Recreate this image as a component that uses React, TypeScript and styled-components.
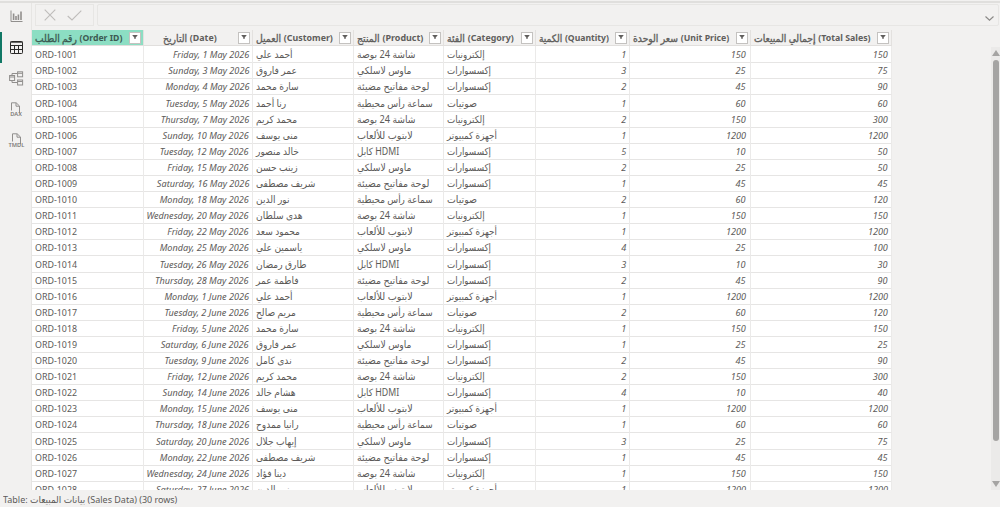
import React from "react";
import styled, { createGlobalStyle } from "styled-components";

const GlobalStyle = createGlobalStyle`
  html, body { margin: 0; padding: 0; overflow: hidden; }
  * { box-sizing: border-box; }
  body { font-family: "Noto Sans", "DejaVu Sans", sans-serif; color: #5c5a58; background: #f2f1f0; }
`;

const Window = styled.div`
  width: 1000px;
  height: 507px;
  padding-top: 1px;
  display: flex;
  flex-direction: column;
  overflow: hidden;
  background: #f2f1f0;
`;

const Body = styled.div`
  display: flex;
  height: 489px;
  border-top: 2px solid #e0dfdd;
`;

const Rail = styled.nav`
  width: 31px;
  flex: none;
  display: flex;
  flex-direction: column;
  margin-top: -2px;
`;

const RailItem = styled.div<{ $active?: boolean }>`
  height: 31px;
  display: flex;
  align-items: center;
  justify-content: center;
  border-left: 2px solid ${(p) => (p.$active ? "#117865" : "transparent")};
  color: ${(p) => (p.$active ? "#2b2a29" : "#918f8d")};
  padding-right: 1px;
`;

const FileIcon = styled.div`
  display: flex;
  flex-direction: column;
  align-items: center;
  svg { display: block; }
`;

const FileLabel = styled.span`
  font-size: 6px;
  font-weight: 600;
  line-height: 6px;
  margin-top: -3px;
  color: #7c7a78;
  transform: scaleX(0.95);
`;

const Main = styled.main`
  flex: 1;
  min-width: 0;
  display: flex;
  flex-direction: column;
  border-left: 1px solid #e6e5e3;
`;

const FormulaBar = styled.div`
  display: flex;
  gap: 3px;
  padding: 1px 1px 4px 3px;
  height: 27px;
`;

const Actions = styled.div`
  width: 59px;
  border: 1px solid #e7e6e4;
  display: flex;
  align-items: center;
  gap: 11px;
  padding: 0 0 0 8px;
  color: #bebcba;
`;

const Input = styled.div`
  flex: 1;
  border: 1px solid #e7e6e4;
  border-radius: 2px;
  display: flex;
  justify-content: flex-end;
  align-items: center;
  padding: 6px 4px 0 0;
  color: #8a8886;
`;

const Content = styled.div`
  display: flex;
  justify-content: space-between;
  height: 460px;
`;

const Grid = styled.div`
  width: 860px;
  height: 460px;
  overflow: hidden;
  background: #fff;
`;

const Row = styled.div`
  display: grid;
  grid-template-columns: 112px 109px 101px 90px 92px 94px 121px 141px;
  height: 16.1px;
`;

const HeadRow = styled(Row)`
  height: 16.3px;
  background: #f2f1f0;
`;

const HeadCell = styled.div<{ $selected?: boolean }>`
  display: flex;
  align-items: center;
  justify-content: space-between;
  padding: 0 2px 0 3px;
  font-size: 9.6px;
  font-weight: 700;
  white-space: nowrap;
  color: ${(p) => (p.$selected ? "#3c5a52" : "#605e5c")};
  background: ${(p) => (p.$selected ? "#8cdec3" : "transparent")};
  border-right: 1px solid #e3e1df;
  border-bottom: 1px solid #e1dfdd;
`;

const Title = styled.span<{ $indent: number; $stretch: number }>`
  display: flex;
  align-items: center;
  gap: 3px;
  margin-left: ${(p) => p.$indent}px;
  margin-right: -14px;
  transform: scaleX(${(p) => p.$stretch});
  transform-origin: left center;
`;

const ArabicTitle = styled.span`
  font-size: 10.1px;
  font-weight: 400;
  -webkit-text-stroke: 0.35px currentColor;
`;

const Filter = styled.span`
  width: 12px;
  height: 12px;
  flex: none;
  background: #fff;
  border: 1px solid #c4c2c0;
  display: flex;
  align-items: center;
  justify-content: center;
  padding-bottom: 2px;
`;

const Cell = styled.div<{ $num?: boolean; $pad?: number }>`
  display: flex;
  align-items: center;
  justify-content: ${(p) => (p.$num ? "flex-end" : "flex-start")};
  padding: 2px ${(p) => p.$pad ?? 3}px 0 3px;
  font-size: 9.6px;
  line-height: 14px;
  white-space: pre;
  font-style: ${(p) => (p.$num ? "italic" : "normal")};
  border-right: 1px solid #ebeae9;
  border-bottom: 1px solid #e6e5e4;
`;

const OrderId = styled.span`
  transform: scaleX(0.925);
  transform-origin: left center;
`;

const Figure = styled.span`
  transform: scaleX(0.95);
  transform-origin: right center;
`;

const Arabic = styled.span<{ $stretch: number }>`
  font-size: 10px;
  margin-top: -2px;
  transform: scaleX(${(p) => p.$stretch});
  transform-origin: left center;
`;

const Scroll = styled.div`
  width: 9px;
  height: 443px;
  margin-top: 17px;
  padding: 3px 0 3px 1px;
  background: #ebeae9;
  display: flex;
  flex-direction: column;
  align-items: center;
`;

const Thumb = styled.div`
  width: 6px;
  height: 381px;
  margin: 4px 0 auto;
  border-radius: 3px;
  background: #a5a4a3;
`;

const Status = styled.footer`
  flex: 1;
  padding-left: 3px;
  font-size: 9.5px;
  line-height: 20px;
  white-space: pre;
`;

const StatusText = styled.span`
  display: inline-block;
  transform: scaleX(0.945);
  transform-origin: left center;
`;

const columns = [
  { ar: "رقم الطلب", en: "Order ID", indent: 0, stretch: 0.9 },
  { ar: "التاريخ", en: "Date", indent: 16, stretch: 0.92 },
  { ar: "العميل", en: "Customer", indent: 0, stretch: 0.92 },
  { ar: "المنتج", en: "Product", indent: 0, stretch: 0.93 },
  { ar: "الفئة", en: "Category", indent: 0, stretch: 0.92 },
  { ar: "الكمية", en: "Quantity", indent: 0, stretch: 0.9 },
  { ar: "سعر الوحدة", en: "Unit Price", indent: 0, stretch: 0.91 },
  { ar: "إجمالي المبيعات", en: "Total Sales", indent: 0, stretch: 0.915 },
];

type Product = { name: string; category: string; price: number; stretch: number };

const products: Record<string, Product> = {
  screen: { name: "شاشة 24 بوصة", category: "إلكترونيات", price: 150, stretch: 0.92 },
  mouse: { name: "ماوس لاسلكي", category: "إكسسوارات", price: 25, stretch: 0.92 },
  keyboard: { name: "لوحة مفاتيح مضيئة", category: "إكسسوارات", price: 45, stretch: 0.95 },
  headset: { name: "سماعة رأس محيطية", category: "صوتيات", price: 60, stretch: 0.89 },
  laptop: { name: "لابتوب للألعاب", category: "أجهزة كمبيوتر", price: 1200, stretch: 0.96 },
  cable: { name: "كابل HDMI", category: "إكسسوارات", price: 10, stretch: 0.88 },
};

const orders: [string, string, string, number][] = [
  ["Friday, 1 May 2026", "أحمد علي", "screen", 1],
  ["Sunday, 3 May 2026", "عمر فاروق", "mouse", 3],
  ["Monday, 4 May 2026", "سارة محمد", "keyboard", 2],
  ["Tuesday, 5 May 2026", "رنا أحمد", "headset", 1],
  ["Thursday, 7 May 2026", "محمد كريم", "screen", 2],
  ["Sunday, 10 May 2026", "منى يوسف", "laptop", 1],
  ["Tuesday, 12 May 2026", "خالد منصور", "cable", 5],
  ["Friday, 15 May 2026", "زينب حسن", "mouse", 2],
  ["Saturday, 16 May 2026", "شريف مصطفى", "keyboard", 1],
  ["Monday, 18 May 2026", "نور الدين", "headset", 2],
  ["Wednesday, 20 May 2026", "هدى سلطان", "screen", 1],
  ["Friday, 22 May 2026", "محمود سعد", "laptop", 1],
  ["Monday, 25 May 2026", "ياسمين علي", "mouse", 4],
  ["Tuesday, 26 May 2026", "طارق رمضان", "cable", 3],
  ["Thursday, 28 May 2026", "فاطمة عمر", "keyboard", 2],
  ["Monday, 1 June 2026", "أحمد علي", "laptop", 1],
  ["Tuesday, 2 June 2026", "مريم صالح", "headset", 2],
  ["Friday, 5 June 2026", "سارة محمد", "screen", 1],
  ["Saturday, 6 June 2026", "عمر فاروق", "mouse", 1],
  ["Tuesday, 9 June 2026", "ندى كامل", "keyboard", 2],
  ["Friday, 12 June 2026", "محمد كريم", "screen", 2],
  ["Sunday, 14 June 2026", "هشام خالد", "cable", 4],
  ["Monday, 15 June 2026", "منى يوسف", "laptop", 1],
  ["Thursday, 18 June 2026", "رانيا ممدوح", "headset", 1],
  ["Saturday, 20 June 2026", "إيهاب جلال", "mouse", 3],
  ["Monday, 22 June 2026", "شريف مصطفى", "keyboard", 1],
  ["Wednesday, 24 June 2026", "دينا فؤاد", "screen", 1],
  ["Saturday, 27 June 2026", "نور الدين", "laptop", 1],
];

const ReportIcon = () => (
  <svg width="13" height="13" viewBox="0 0 13 13" fill="none" stroke="currentColor">
    <path d="M1 .5V11.5H12.5" />
    <path d="M3.6 3.5V10M6 6V10M8.4 4.5V10M11 1.5V10" strokeWidth="1.6" />
  </svg>
);

const TableIcon = () => (
  <svg width="13" height="13" viewBox="0 0 13 13" fill="none" stroke="currentColor">
    <rect x=".5" y=".5" width="12" height="12" rx=".8" />
    <path d="M.5 1.2H12.5M.5 4.5H12.5M.5 8.5H12.5M4.5 4V12M8.5 4V12" />
  </svg>
);

const ModelIcon = () => (
  <svg width="15" height="15" viewBox="0 0 15 15" fill="none" stroke="currentColor">
    <rect x=".6" y="4.5" width="5" height="5" />
    <path d="M.6 6H5.6M8.6 2.3H13.6M8.6 10.5H13.6M3 9.5V11.5H8.6M3 4.5V2.5H8.6" />
    <rect x="8.6" y=".8" width="5" height="5" />
    <rect x="8.6" y="9" width="5" height="5" />
  </svg>
);

const PageIcon = () => (
  <svg width="11" height="12" viewBox="0 0 11 12" fill="none" stroke="currentColor">
    <path d="M1.5 8.5V.8H6.2L9.5 4V11" />
    <path d="M6 1V4.2H9.5" />
  </svg>
);

export default function App() {
  return (
    <Window>
      <GlobalStyle />
      <Body>
        <Rail>
          <RailItem><ReportIcon /></RailItem>
          <RailItem $active><TableIcon /></RailItem>
          <RailItem><ModelIcon /></RailItem>
          <RailItem><FileIcon><PageIcon /><FileLabel>DAX</FileLabel></FileIcon></RailItem>
          <RailItem><FileIcon><PageIcon /><FileLabel>TMDL</FileLabel></FileIcon></RailItem>
        </Rail>
        <Main>
          <FormulaBar>
            <Actions>
              <svg width="12" height="12" viewBox="0 0 12 12" fill="none" stroke="currentColor" strokeWidth="1.1">
                <path d="M.7.7 11.3 11.3M11.3.7.7 11.3" />
              </svg>
              <svg width="15" height="11" viewBox="0 0 15 11" fill="none" stroke="currentColor" strokeWidth="1.1">
                <path d="M.7 6 5 10 14.3.7" />
              </svg>
            </Actions>
            <Input>
              <svg width="9" height="5" viewBox="0 0 9 5" fill="none" stroke="currentColor" strokeWidth="1.1">
                <path d="M.5.5 4.5 4.2 8.5.5" />
              </svg>
            </Input>
          </FormulaBar>
          <Content>
            <Grid>
              <HeadRow>
                {columns.map((c, i) => (
                  <HeadCell key={c.en} $selected={i === 0}>
                    <Title $indent={c.indent} $stretch={c.stretch}>
                      <ArabicTitle>{c.ar}</ArabicTitle>
                      <span>({c.en})</span>
                    </Title>
                    <Filter>
                      <svg width="6" height="4" viewBox="0 0 6 4" fill="#605e5c">
                        <path d="M.2 0H5.8L3.6 2.8V4H2.4V2.8Z" />
                      </svg>
                    </Filter>
                  </HeadCell>
                ))}
              </HeadRow>
              {orders.map(([date, customer, key, quantity], i) => {
                const product = products[key];
                return (
                  <Row key={i}>
                    <Cell><OrderId>ORD-{1001 + i}</OrderId></Cell>
                    <Cell $num><Figure>{date}</Figure></Cell>
                    <Cell><Arabic $stretch={0.91}>{customer}</Arabic></Cell>
                    <Cell><Arabic $stretch={product.stretch}>{product.name}</Arabic></Cell>
                    <Cell><Arabic $stretch={key === "headset" ? 0.94 : 0.875}>{product.category}</Arabic></Cell>
                    <Cell $num><Figure>{quantity}</Figure></Cell>
                    <Cell $num $pad={4}><Figure>{product.price}</Figure></Cell>
                    <Cell $num><Figure>{product.price * quantity}</Figure></Cell>
                  </Row>
                );
              })}
            </Grid>
            <Scroll>
              <svg width="8" height="6" viewBox="0 0 8 6" fill="#a5a4a3"><path d="M4 0 8 6H0Z" /></svg>
              <Thumb />
              <svg width="8" height="6" viewBox="0 0 8 6" fill="#a5a4a3"><path d="M0 0H8L4 6Z" /></svg>
            </Scroll>
          </Content>
        </Main>
      </Body>
      <Status><StatusText>Table: بيانات المبيعات (Sales Data) (30 rows)</StatusText></Status>
    </Window>
  );
}
